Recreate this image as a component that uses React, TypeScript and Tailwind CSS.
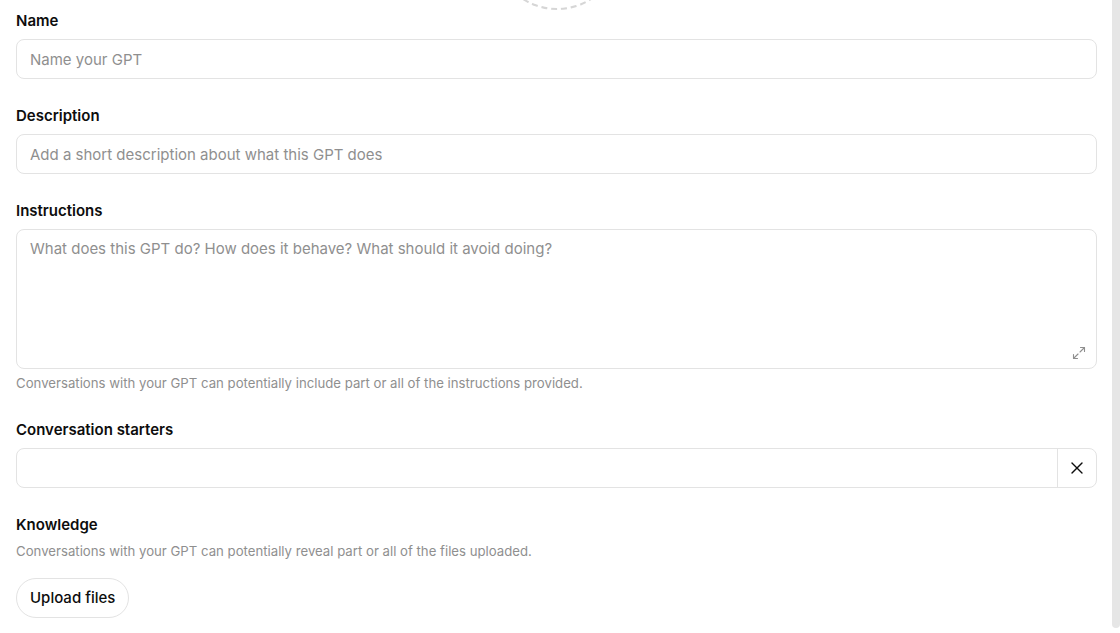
import { X } from "lucide-react";

/* ------------------------------------------------------------------ */
/*  Small pieces                                                       */
/* ------------------------------------------------------------------ */

function Label({ children }: { children: string }) {
  return (
    <div className="mb-2 text-[15px] font-semibold leading-5 text-[#0d0d0d]">
      {children}
    </div>
  );
}

function ExpandIcon() {
  return (
    <svg width="14" height="14" viewBox="0 0 14 14" fill="none" stroke="#8f8f8f" strokeWidth="1.1" strokeLinecap="round" strokeLinejoin="round">
      {/* top-right arrow */}
      <path d="M8 6 L12.5 1.5" />
      <path d="M8.5 1.5 H12.5 V5.5" />
      {/* bottom-left arrow */}
      <path d="M6 8 L1.5 12.5" />
      <path d="M1.5 8.5 V12.5 H5.5" />
    </svg>
  );
}

/* ------------------------------------------------------------------ */
/*  Page                                                               */
/* ------------------------------------------------------------------ */

export default function App() {
  return (
    <div
      className="flex h-[633px] w-[1120px] overflow-hidden bg-white text-[#0d0d0d]"
      style={{ fontFamily: "Inter, 'Noto Sans', sans-serif" }}
    >
      <div className="flex-1 pl-4 pr-[15px]">
        {/* avatar picker, scrolled mostly out of view */}
        <div className="-mt-[118px] mb-[1px] flex justify-center">
          <div className="h-32 w-32 rounded-full border-2 border-dashed border-[#d6d6d6]" />
        </div>

        {/* Name */}
        <Label>Name</Label>
        <input
          placeholder="Name your GPT"
          className="mb-[27px] block h-10 w-full rounded-lg border border-[#e3e3e3] px-[13px] text-[15px] outline-none placeholder:text-[#8f8f8f]"
        />

        {/* Description */}
        <Label>Description</Label>
        <input
          placeholder="Add a short description about what this GPT does"
          className="mb-[27px] block h-10 w-full rounded-lg border border-[#e3e3e3] px-[13px] text-[15px] outline-none placeholder:text-[#8f8f8f]"
        />

        {/* Instructions */}
        <Label>Instructions</Label>
        <div className="relative">
          <textarea
            placeholder="What does this GPT do? How does it behave? What should it avoid doing?"
            className="block h-[140px] w-full resize-none rounded-lg border border-[#e3e3e3] px-[13px] pt-[9px] text-[15px] leading-5 outline-none placeholder:text-[#8f8f8f]"
          />
          <div className="absolute bottom-[9px] right-[11px]">
            <ExpandIcon />
          </div>
        </div>
        <p className="mt-1.5 text-[13.2px] leading-4 text-[#8f8f8f]">
          Conversations with your GPT can potentially include part or all of the instructions provided.
        </p>

        {/* Conversation starters */}
        <div className="mt-[29px]">
          <Label>Conversation starters</Label>
        </div>
        <div className="mb-[27px] flex h-10 w-full overflow-hidden rounded-lg border border-[#e3e3e3]">
          <input className="min-w-0 flex-1 px-[13px] text-[15px] outline-none" />
          <button className="flex w-[39px] items-center justify-center border-l border-[#e3e3e3]">
            <X size={20} strokeWidth={1.6} className="text-[#0d0d0d]" />
          </button>
        </div>

        {/* Knowledge */}
        <Label>Knowledge</Label>
        <p className="text-[13.2px] leading-4 text-[#8f8f8f]">
          Conversations with your GPT can potentially reveal part or all of the files uploaded.
        </p>
        <button className="mt-[19px] h-10 rounded-full border border-[#e3e3e3] px-[13px] text-[15px] font-medium text-[#0d0d0d]">
          Upload files
        </button>
      </div>

      {/* scrollbar track */}
      <div className="h-[628px] w-2 rounded-b-full bg-[#e6e6e6]" />
    </div>
  );
}
